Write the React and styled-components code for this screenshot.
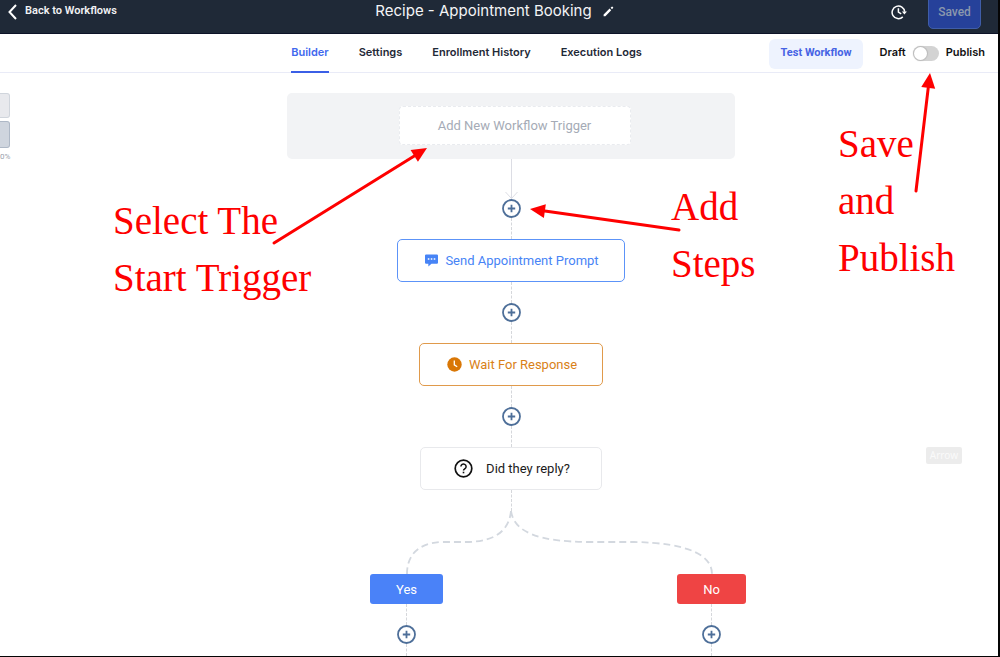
import React from "react";
import styled, { createGlobalStyle, css } from "styled-components";

const Global = createGlobalStyle`
  *, *::before, *::after { box-sizing: border-box; }
  body { margin: 0; background: #fff; font-family: Roboto, "Liberation Sans", sans-serif; }
  button { font: inherit; cursor: pointer; margin: 0; }
`;

const Frame = styled.div`
  min-height: 100vh;
  display: flex;
  flex-direction: column;
  border-right: 2px solid #050505;
  border-bottom: 1px solid #050505;
  overflow: hidden;
`;

const Header = styled.header`
  display: grid;
  grid-template-columns: 1fr auto 1fr;
  align-items: start;
  height: 34px;
  padding: 0 17px 0 8px;
  background: #1f2937;
  border-bottom: 1px solid #0d1328;
  color: #fff;
`;

const BackLink = styled.a`
  display: flex;
  align-items: center;
  gap: 8px;
  height: 24px;
  color: #f1f2f4;
  font-size: 11px;
  font-weight: 600;
  line-height: 20px;
  text-decoration: none;

  span { height: 22px; }
`;

const TitleGroup = styled.div`
  display: flex;
  align-items: center;
  gap: 11px;
`;

const Title = styled.h1`
  margin: 0;
  font: 400 15px/22px Inter, "Liberation Sans", sans-serif;
  color: #f3f4f6;
`;

const IconButton = styled.button`
  display: flex;
  padding: 0;
  border: 0;
  background: none;
  color: #fff;
`;

const HeaderActions = styled.div`
  display: flex;
  justify-content: flex-end;
  align-items: center;
  gap: 21px;
  height: 24px;
`;

const SavedButton = styled.button`
  width: 53px;
  height: 34px;
  padding: 0;
  border: 1px solid #3f5da8;
  border-radius: 5px;
  background: #26419a;
  color: #8b98ad;
  font-size: 12px;
  font-weight: 500;
`;

const Nav = styled.nav`
  display: grid;
  grid-template-columns: 1fr auto 1fr;
  height: 39px;
  padding: 0 13px 0 0;
  border-bottom: 1px solid #e9ebf7;
`;

const Tabs = styled.div`
  grid-column: 2;
  display: flex;
  gap: 30px;
  margin-left: -52px;
`;

const Tab = styled.a`
  height: 39px;
  padding-top: 9px;
  border-bottom: 2px solid ${(p) => (p.$active ? "#3b5fe6" : "transparent")};
  color: ${(p) => (p.$active ? "#4169ee" : "#1f2937")};
  font: 600 11px/18px Inter, "Liberation Sans", sans-serif;
  text-decoration: none;
  white-space: nowrap;
`;

const NavActions = styled.div`
  display: flex;
  justify-content: flex-end;
  align-items: center;
  gap: 16px;
  height: 37px;
  padding-top: 2px;
`;

const TestButton = styled.button`
  height: 30px;
  padding: 0 12px 2px;
  border: 0;
  border-radius: 6px;
  background: #eef3fe;
  color: #4763e4;
  font-size: 11px;
  font-weight: 700;
`;

const PublishToggle = styled.div`
  display: flex;
  align-items: center;
  gap: 7px;
  font: 600 11px/18px Inter, "Liberation Sans", sans-serif;
  color: #111;

  span, label { padding-bottom: 3px; }
`;

const Switch = styled.input`
  appearance: none;
  width: 26px;
  height: 15px;
  margin: 0;
  border-radius: 8px;
  background: #d3d3d3;
  cursor: pointer;

  &::before {
    content: "";
    display: block;
    width: 13px;
    height: 13px;
    margin: 1px;
    border-radius: 50%;
    background: #fff;
    box-shadow: 0 0 1px 1px #bbb;
  }

  &:checked::before { margin-left: 12px; }
`;

const Canvas = styled.main`
  position: relative;
  flex: 1;
  padding: 20px 0 0 24px;
`;

const Flow = styled.div`
  display: flex;
  flex-direction: column;
  align-items: center;
`;

const TriggerPanel = styled.section`
  display: flex;
  justify-content: center;
  align-items: center;
  width: 448px;
  height: 66px;
  padding: 0 0 1px 7px;
  border-radius: 5px;
  background: #f2f3f5;
`;

const TriggerButton = styled.button`
  width: 232px;
  height: 39px;
  border: 1px dashed #e9ebef;
  border-radius: 4px;
  background: #fff;
  color: #a5abb6;
  font-size: 13px;
`;

const DottedLine = styled.div`
  height: ${(p) => p.$height || 21}px;
  border-left: 1px dashed #d5d7db;
`;

const PlusButton = styled(IconButton)`
  height: 19px;
  color: #4e6f99;
`;

const tones = {
  message: css`width: 228px; padding-left: 2px; gap: 7px; border-color: #5c93f8; color: #4784f6;`,
  wait: css`width: 184px; padding-left: 2px; gap: 7px; border-color: #e09a4b; color: #d98117;`,
  condition: css`width: 182px; padding-left: 2px; gap: 13px; border-color: #e8e9ec; color: #1b1b1b;`,
};

const StepButton = styled.button`
  display: flex;
  justify-content: center;
  align-items: center;
  height: 43px;
  padding: 0;
  border: 1px solid;
  border-radius: 5px;
  background: #fff;
  font-size: 13px;
  ${(p) => tones[p.$tone]}
`;

const BranchArea = styled.div`
  width: 376px;
  margin-left: 94px;

  > svg { display: block; }
`;

const Branches = styled.div`
  display: flex;
  justify-content: space-between;
`;

const Branch = styled.div`
  display: flex;
  flex-direction: column;
  align-items: center;
`;

const BranchButton = styled.button`
  width: ${(p) => (p.$no ? 69 : 73)}px;
  height: 30px;
  border: 0;
  border-radius: 3px;
  background: ${(p) => (p.$no ? "#ef4444" : "#4a82f8")};
  color: #fff;
  font-size: 13px;
`;

const ZoomControls = styled.div`
  position: absolute;
  left: 0;
  top: 20px;
  display: flex;
  flex-direction: column;
  gap: 3px;
`;

const ZoomButton = styled.button`
  width: 10px;
  height: ${(p) => (p.$dark ? 27 : 25)}px;
  padding: 0;
  border: 1px solid ${(p) => (p.$dark ? "#aeb8c6" : "#d0d5dc")};
  border-left: 0;
  border-radius: 0 3px 3px 0;
  background: ${(p) => (p.$dark ? "#cfd5de" : "#e8e9ed")};
`;

const ZoomValue = styled.span`
  color: #9aa1ad;
  font-size: 8px;
  line-height: 11px;
`;

const Tooltip = styled.div`
  position: absolute;
  right: 36px;
  top: 374px;
  padding: 0 4px;
  border-radius: 2px;
  background: #ececec;
  color: #fafafa;
  font: 10px/17px "Noto Sans", sans-serif;
`;

const Note = styled.p`
  position: absolute;
  left: ${(p) => p.$left};
  top: ${(p) => p.$top}px;
  margin: 0;
  color: #fe0000;
  font: 39px/57px "Liberation Serif", serif;
  white-space: nowrap;
`;

const ArrowSvg = styled.svg`
  position: absolute;
  left: ${(p) => p.$left};
  top: ${(p) => p.$top}px;
  pointer-events: none;
`;

function Arrow({ left, top, width, height, from, to }) {
  const dx = to[0] - from[0];
  const dy = to[1] - from[1];
  const len = Math.hypot(dx, dy);
  const ux = dx / len;
  const uy = dy / len;
  const bx = to[0] - ux * 15;
  const by = to[1] - uy * 15;
  const head = `${to[0]},${to[1]} ${bx - uy * 7},${by + ux * 7} ${bx + uy * 7},${by - ux * 7}`;
  return (
    <ArrowSvg $left={left} $top={top} width={width} height={height} aria-hidden="true">
      <line x1={from[0]} y1={from[1]} x2={bx} y2={by} stroke="#fe0000" strokeWidth="3" strokeLinecap="round" />
      <polygon points={head} fill="#fe0000" />
    </ArrowSvg>
  );
}

function AddStep() {
  return (
    <PlusButton aria-label="Add step">
      <svg width="19" height="19" viewBox="0 0 19 19" fill="none" stroke="currentColor" strokeWidth="1.8">
        <circle cx="9.5" cy="9.5" r="8.5" fill="#fff" />
        <path d="M9.5 5.8v7.4M5.8 9.5h7.4" />
      </svg>
    </PlusButton>
  );
}

export default function App() {
  return (
    <Frame>
      <Global />
      <Header>
        <BackLink href="#workflows">
          <svg width="9" height="16" viewBox="0 0 9 16" fill="none" stroke="#fff" strokeWidth="2">
            <path d="M8 1L1.5 8 8 15" />
          </svg>
          <span>Back to Workflows</span>
        </BackLink>
        <TitleGroup>
          <Title>Recipe - Appointment Booking</Title>
          <IconButton aria-label="Rename workflow">
            <svg width="11" height="11" viewBox="0 0 11 11" fill="#fff">
              <path d="M.6 8.4L6.6 2.6 8.2 4.2 2.4 10.2H.6zM7.6 1.8L8.7.7q.4-.3.8 0l.6.6q.3.4 0 .8L9 3.3z" />
            </svg>
          </IconButton>
        </TitleGroup>
        <HeaderActions>
          <IconButton aria-label="Version history">
            <svg width="16" height="16" viewBox="0 0 16 16" fill="none" stroke="#fff" strokeWidth="1.5">
              <path d="M11.8 12.9A6.3 6.3 0 1 1 13.7 7.8" />
              <path d="M7.4 4.2v4l2.8 1.700" />
              <path d="M10.9 7.6h5l-2.500 3z" fill="#fff" stroke="none" />
            </svg>
          </IconButton>
          <SavedButton>Saved</SavedButton>
        </HeaderActions>
      </Header>

      <Nav>
        <Tabs>
          <Tab href="#builder" $active>Builder</Tab>
          <Tab href="#settings">Settings</Tab>
          <Tab href="#history">Enrollment History</Tab>
          <Tab href="#logs">Execution Logs</Tab>
        </Tabs>
        <NavActions>
          <TestButton>Test Workflow</TestButton>
          <PublishToggle>
            <span>Draft</span>
            <Switch type="checkbox" id="publish" />
            <label htmlFor="publish">Publish</label>
          </PublishToggle>
        </NavActions>
      </Nav>

      <Canvas>
        <Flow>
          <TriggerPanel>
            <TriggerButton>Add New Workflow Trigger</TriggerButton>
          </TriggerPanel>
          <svg width="13" height="40" viewBox="0 0 13 40" fill="none" stroke="#dcdde4">
            <path d="M6.5 0v40M.5 33l6 6.500 6-6.500" />
          </svg>
          <AddStep />
          <DottedLine />
          <StepButton $tone="message">
            <svg width="13" height="13" viewBox="0 0 14 13" fill="currentColor">
              <path d="M1.2 0h11.600Q14 0 14 1.200v7.600Q14 10 12.800 10H7l-3.400 3V10H1.200Q0 10 0 8.800V1.200Q0 0 1.200 0z" />
              <path d="M3 4h1.700v1.700H3zM6.200 4h1.700v1.700H6.200zM9.400 4h1.700v1.700H9.400z" fill="#fff" />
            </svg>
            Send Appointment Prompt
          </StepButton>
          <DottedLine />
          <AddStep />
          <DottedLine />
          <StepButton $tone="wait">
            <svg width="15" height="15" viewBox="0 0 15 15">
              <circle cx="7.5" cy="7.5" r="7.2" fill="#d97706" />
              <path d="M7.3 3.4v4.400l2.900 1.900" fill="none" stroke="#fff" strokeWidth="1.3" />
            </svg>
            Wait For Response
          </StepButton>
          <DottedLine />
          <AddStep />
          <DottedLine />
          <StepButton $tone="condition">
            <svg width="19" height="19" viewBox="0 0 19 19" fill="none" stroke="#111" strokeWidth="1.7">
              <circle cx="9.5" cy="9.5" r="8.3" />
              <path d="M6.9 7.6a2.600 2.500 0 1 1 4.100 2q-1.500 1-1.500 1.900" strokeWidth="1.5" />
              <path d="M9.5 12.7v1.600" strokeWidth="1.6" />
            </svg>
            Did they reply?
          </StepButton>
          <DottedLine />
          <BranchArea>
            <svg width="376" height="63" viewBox="0 0 376 63" fill="none" stroke="#d3d8df" strokeWidth="1.8" strokeDasharray="7 4">
              <path d="M141 0C139 20 125 30 99 31H72C46 32 37 46 37 63" />
              <path d="M141 0C144 21 168 31 220 31H264C318 32 342 44 342 63" />
            </svg>
            <Branches>
              <Branch>
                <BranchButton>Yes</BranchButton>
                <DottedLine />
                <AddStep />
                <DottedLine $height={12} />
              </Branch>
              <Branch>
                <BranchButton $no>No</BranchButton>
                <DottedLine />
                <AddStep />
                <DottedLine $height={12} />
              </Branch>
            </Branches>
          </BranchArea>
        </Flow>

        <ZoomControls>
          <ZoomButton aria-label="Zoom in" />
          <ZoomButton $dark aria-label="Zoom out" />
          <ZoomValue>0%</ZoomValue>
        </ZoomControls>

        <Note $left="calc(50% - 386px)" $top={119}>Select The<br />Start Trigger</Note>
        <Arrow left="calc(50% - 230px)" top={70} width={162} height={106} from={[5, 100]} to={[158, 5]} />
        <Note $left="calc(50% + 172px)" $top={105}>Add<br />Steps</Note>
        <Arrow left="calc(50% + 26px)" top={126} width={162} height={40} from={[154, 31]} to={[5, 10]} />
        <Note $left="calc(100% - 160px)" $top={42}>Save<br />and<br />Publish</Note>
        <Arrow left="calc(100% - 88px)" top={-5} width={30} height={130} from={[6, 123]} to={[20, 5]} />
        <Tooltip>Arrow</Tooltip>
      </Canvas>
    </Frame>
  );
}
